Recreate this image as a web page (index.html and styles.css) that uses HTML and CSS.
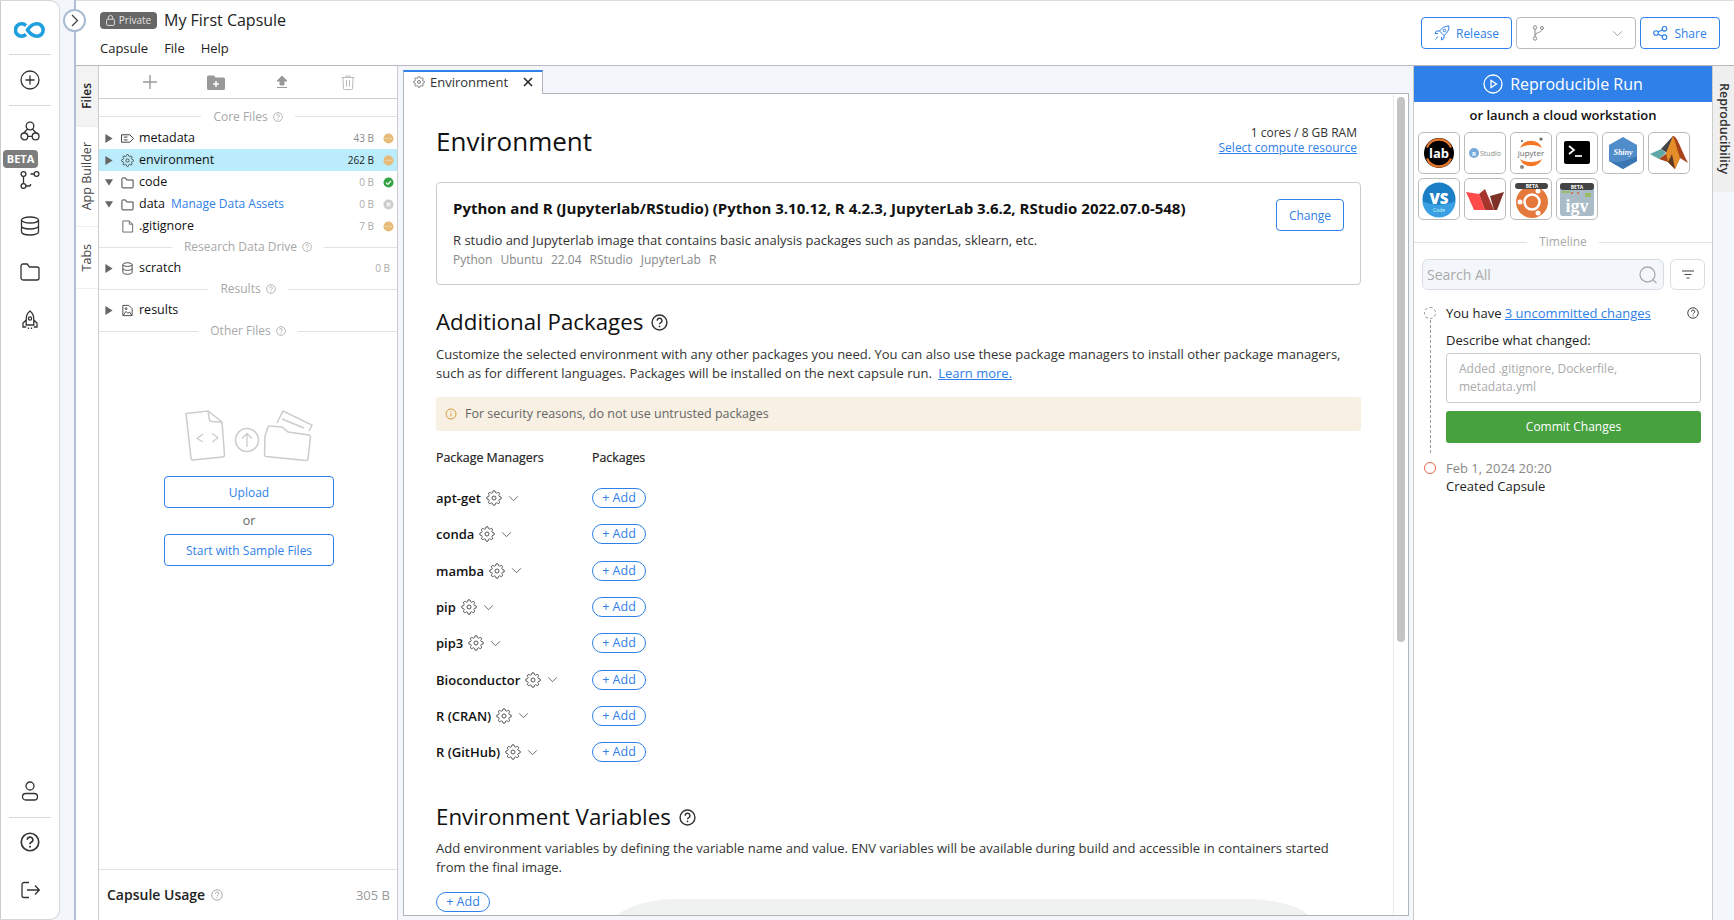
FILE: index.html
```html
<!DOCTYPE html>
<html lang="en">
<head>
<meta charset="utf-8">
<title>My First Capsule</title>
<link rel="stylesheet" href="styles.css">
</head>
<body>
<svg class="defs" aria-hidden="true">
  <symbol id="gear" viewBox="0 0 24 24"><g fill="none" stroke="currentColor" stroke-width="1.5"><circle cx="12" cy="12" r="3"/><path d="M19.4 15a1.65 1.65 0 0 0 .33 1.82l.06.06a2 2 0 0 1 0 2.83 2 2 0 0 1-2.83 0l-.06-.06a1.65 1.65 0 0 0-1.82-.33 1.65 1.65 0 0 0-1 1.51V21a2 2 0 0 1-2 2 2 2 0 0 1-2-2v-.09A1.65 1.65 0 0 0 9 19.4a1.65 1.65 0 0 0-1.82.33l-.06.06a2 2 0 0 1-2.83 0 2 2 0 0 1 0-2.83l.06-.06a1.65 1.65 0 0 0 .33-1.82 1.65 1.65 0 0 0-1.51-1H3a2 2 0 0 1-2-2 2 2 0 0 1 2-2h.09A1.65 1.65 0 0 0 4.6 9a1.65 1.65 0 0 0-.33-1.82l-.06-.06a2 2 0 0 1 0-2.83 2 2 0 0 1 2.83 0l.06.06a1.65 1.65 0 0 0 1.82.33H9a1.65 1.65 0 0 0 1-1.51V3a2 2 0 0 1 2-2 2 2 0 0 1 2 2v.09a1.65 1.65 0 0 0 1 1.51 1.65 1.65 0 0 0 1.82-.33l.06-.06a2 2 0 0 1 2.83 0 2 2 0 0 1 0 2.83l-.06.06a1.65 1.65 0 0 0-.33 1.82V9a1.65 1.65 0 0 0 1.51 1H21a2 2 0 0 1 2 2 2 2 0 0 1-2 2h-.09a1.65 1.65 0 0 0-1.51 1z"/></g></symbol>
  <symbol id="help" viewBox="0 0 24 24"><circle cx="12" cy="12" r="10.5" fill="none" stroke="currentColor" stroke-width="2"/><path d="M8.8 9.4a3.3 3.3 0 1 1 4.6 3c-1 .5-1.4 1-1.4 2.2" fill="none" stroke="currentColor" stroke-width="2"/><circle cx="12" cy="17.6" r="1.2" fill="currentColor"/></symbol>
  <symbol id="chev" viewBox="0 0 12 8"><path d="M1 1.5l5 5 5-5" fill="none" stroke="currentColor" stroke-width="1.1"/></symbol>
  <symbol id="arrow-r" viewBox="0 0 8 10"><path d="M0 0l8 5-8 5z" fill="currentColor"/></symbol>
  <symbol id="arrow-d" viewBox="0 0 10 8"><path d="M0 0h10L5 8z" fill="currentColor"/></symbol>
  <symbol id="folder" viewBox="0 0 14 13"><path d="M1 3V11.5a.8.8 0 0 0 .8.8h10.4a.8.8 0 0 0 .8-.8V3.8H6L5 1.6H1.8A.8.8 0 0 0 1 2.4z" fill="none" stroke="currentColor"/></symbol>
  <symbol id="dot-wait" viewBox="0 0 12 12"><circle cx="6" cy="6" r="5.5" fill="#e6bb78"/><g fill="#f3dcb4"><circle cx="3.2" cy="6" r=".9"/><circle cx="6" cy="6" r=".9"/><circle cx="8.8" cy="6" r=".9"/></g></symbol>
</svg>

<nav class="rail">
  <div class="rail-logo">
    <svg width="32" height="16" viewBox="0 0 32 16"><path d="M12 3.600A6.200 6.200 0 1 0 12 12.400" fill="none" stroke="#1f9fde" stroke-width="3.600"/><path d="M13.500 8C15.500 5 18 1.800 23 1.800A6.200 6.200 0 0 1 23 14.200C18 14.200 15.500 11 13.500 8Z" fill="none" stroke="#1f9fde" stroke-width="3.600"/></svg>
  </div>
  <div class="rail-btn rail-plus bordered">
    <svg class="ri" viewBox="0 0 20 20"><circle cx="10" cy="10" r="9"/><path d="M10 5.500v9M5.500 10h9"/></svg>
  </div>
  <div class="rail-btn rail-net">
    <svg class="ri" viewBox="0 0 20 20"><circle cx="10" cy="5" r="3.800"/><circle cx="4.400" cy="15.400" r="3.400"/><circle cx="15.600" cy="15.400" r="3.400"/><path d="M7.600 8L3.500 12.200M12.400 8l4.100 4.200M7.800 15.400h4.400"/></svg>
  </div>
  <div class="rail-btn rail-git">
    <svg class="ri" viewBox="0 0 20 20"><circle cx="3.500" cy="4" r="2.400"/><circle cx="16.500" cy="4" r="2.400"/><circle cx="3.500" cy="16" r="2.400"/><path d="M3.500 6.400V13.600M14.100 4H10.500M5.900 16H9c1 0 1.600-.6 1.600-2"/></svg>
  </div>
  <div class="rail-btn rail-db">
    <svg class="ri" viewBox="0 0 20 20"><ellipse cx="10" cy="4" rx="8.500" ry="3"/><path d="M1.500 4v12c0 1.700 3.800 3 8.500 3s8.500-1.300 8.500-3V4M1.500 10c0 1.700 3.800 3 8.500 3s8.500-1.300 8.500-3"/></svg>
  </div>
  <div class="rail-btn rail-folder">
    <svg class="ri" viewBox="0 0 20 20"><path d="M1 4a2 2 0 0 1 2-2h4.200l2.300 3H17a2 2 0 0 1 2 2v9a2 2 0 0 1-2 2H3a2 2 0 0 1-2-2z"/></svg>
  </div>
  <div class="rail-btn">
    <svg class="ri" viewBox="0 0 20 20"><path d="M10 1c2.600 2 3.800 5 3.800 8v6H6.200V9C6.200 6 7.400 3 10 1zM6.200 10L3 13v4h3.200M13.800 10L17 13v4h-3.200M8.500 17.500v1.500M11.500 17.500v1.500"/><circle cx="10" cy="8.500" r="1.600"/></svg>
  </div>
  <div class="beta-badge">BETA</div>
  <div class="rail-bottom">
    <div class="rail-btn rail-user bordered">
      <svg class="ri" viewBox="0 0 20 20"><circle cx="10" cy="5" r="4"/><rect x="2.500" y="12.500" width="15" height="6.500" rx="3.250"/></svg>
    </div>
    <div class="rail-btn rail-help">
      <svg class="ri ri-help"><use href="#help"/></svg>
    </div>
    <div class="rail-btn">
      <svg class="ri" viewBox="0 0 20 20"><path d="M9 2.500H4a2 2 0 0 0-2 2v11a2 2 0 0 0 2 2h5M7 10h12M15 5.500l4.300 4.500-4.300 4.500"/></svg>
    </div>
  </div>
</nav>

<div class="gutter">
  <div class="toggle"><svg width="8" height="13" viewBox="0 0 8 13"><path d="M1 1l5.500 5.500L1 12" fill="none" stroke="#444" stroke-width="1.300"/></svg></div>
</div>

<div class="main">
  <header class="top">
    <div class="top-left">
      <div class="title-row">
        <span class="badge">
          <svg width="9" height="11" viewBox="0 0 9 11"><rect x=".6" y="4.200" width="7.800" height="6.200" rx="1" fill="none" stroke="#ddd"/><path d="M2.300 4.200V2.700a2.200 2.200 0 0 1 4.400 0v1.500" fill="none" stroke="#ddd"/></svg>
          Private
        </span>
        <span class="title">My First Capsule</span>
      </div>
      <div class="menu"><span>Capsule</span><span>File</span><span>Help</span></div>
    </div>
    <div class="top-actions">
      <button class="tbtn tbtn-release">
        <svg width="16" height="16" viewBox="0 0 16 16" fill="none" stroke="#2f80e8"><path d="M15 1c-4 0-7 1.500-9.500 5l4.500 4.500C13.500 8 15 5 15 1zM5.500 6H2.500L1 8.500h3M10 10.500v3L7.500 15v-3M4 11.500L1.500 14.500"/><circle cx="10.500" cy="5.500" r="1.300"/></svg>
        Release
      </button>
      <button class="tbtn tbtn-branch">
        <svg width="12" height="16" viewBox="0 0 12 16" fill="none" stroke="#888"><circle cx="3" cy="2.500" r="1.700"/><circle cx="3" cy="13.500" r="1.700"/><circle cx="10" cy="3" r="1.500"/><path d="M3 4.200v7.600M10 4.500c0 3-7 3-7 6"/></svg>
        <svg class="branch-chev"><use href="#chev"/></svg>
      </button>
      <button class="tbtn tbtn-share">
        <svg width="15" height="14" viewBox="0 0 15 14" fill="none" stroke="#2f80e8" stroke-width="1.100"><circle cx="3" cy="7" r="2.300"/><circle cx="11.500" cy="2.800" r="2.300"/><circle cx="11.500" cy="11.200" r="2.300"/><path d="M5 6l4.500-2.300M5 8l4.500 2.300"/></svg>
        Share
      </button>
    </div>
  </header>

  <div class="work">
    <div class="vtabs">
      <div class="vtab vtab-files"><span>Files</span></div>
      <div class="vtab vtab-app"><span>App Builder</span></div>
      <div class="vtab vtab-tabs"><span>Tabs</span></div>
    </div>

    <aside class="files">
      <div class="file-tools">
        <svg width="16" height="16" viewBox="0 0 16 16"><path d="M8 1v14M1 8h14" stroke="#999" stroke-width="1.400" fill="none"/></svg>
        <svg width="18" height="15" viewBox="0 0 18 15"><path d="M0 2a1.500 1.500 0 0 1 1.500-1.500H7L8.500 2.500h8A1.500 1.500 0 0 1 18 4v9.500a1.500 1.500 0 0 1-1.500 1.500h-15A1.500 1.500 0 0 1 0 13.500z" fill="#999"/><path d="M9 6v6M6 9h6" stroke="#fff" stroke-width="1.500"/></svg>
        <svg width="12" height="15" viewBox="0 0 12 15"><path d="M6 1l5 5H8v4H4V6H1zM1 12.500h10" fill="#999" stroke="#999"/></svg>
        <svg width="14" height="15" viewBox="0 0 14 15" fill="none" stroke="#bbb"><path d="M.5 2.500h13M5 2.500V1h4v1.500M2 2.500l.5 11a1 1 0 0 0 1 1h7a1 1 0 0 0 1-1l.5-11M5.500 5v6.500M8.500 5v6.500"/></svg>
      </div>
      <div class="sect sect-core"><span>Core Files</span><svg class="qi"><use href="#help"/></svg></div>
      <div class="row">
        <svg class="tw"><use href="#arrow-r"/></svg>
        <svg class="fi" viewBox="0 0 14 13" fill="none" stroke="#333"><path d="M.5 2.500h9l4 4-4 4h-9zM3 5h4M3 8h4"/></svg>
        <span class="name">metadata</span><span class="size">43 B</span><svg class="st"><use href="#dot-wait"/></svg>
      </div>
      <div class="row row-sel">
        <svg class="tw"><use href="#arrow-r"/></svg>
        <svg class="fi"><use href="#gear"/></svg>
        <span class="name">environment</span><span class="size">262 B</span><svg class="st"><use href="#dot-wait"/></svg>
      </div>
      <div class="row">
        <svg class="tw"><use href="#arrow-d"/></svg>
        <svg class="fi"><use href="#folder"/></svg>
        <span class="name">code</span><span class="size size-light">0 B</span>
        <svg class="st" viewBox="0 0 12 12"><circle cx="6" cy="6" r="5.500" fill="#35a244"/><path d="M3.300 6.200l1.900 1.800 3.500-3.600" stroke="#fff" stroke-width="1.300" fill="none"/></svg>
      </div>
      <div class="row">
        <svg class="tw"><use href="#arrow-d"/></svg>
        <svg class="fi"><use href="#folder"/></svg>
        <span class="name">data</span><a class="assets">Manage Data Assets</a><span class="size size-light">0 B</span>
        <svg class="st" viewBox="0 0 12 12"><circle cx="6" cy="6" r="5.500" fill="#ccc"/><path d="M4 4l4 4M8 4l-4 4" stroke="#fff" stroke-width="1.200"/></svg>
      </div>
      <div class="row">
        <span class="tw"></span>
        <svg class="fi" viewBox="0 0 14 13" fill="none" stroke="#666"><path d="M2 .5h7l3.500 3.500v8.500H2zM9 .5V4h3.500"/></svg>
        <span class="name">.gitignore</span><span class="size size-light">7 B</span><svg class="st"><use href="#dot-wait"/></svg>
      </div>
      <div class="sect"><span>Research Data Drive</span><svg class="qi"><use href="#help"/></svg></div>
      <div class="row">
        <svg class="tw"><use href="#arrow-r"/></svg>
        <svg class="fi" viewBox="0 0 14 14" fill="none" stroke="#444"><ellipse cx="7" cy="2.800" rx="5" ry="2"/><path d="M2 2.800v8.400c0 1.100 2.200 2 5 2s5-.9 5-2V2.800M2 7c0 1.100 2.200 2 5 2s5-.9 5-2"/></svg>
        <span class="name">scratch</span><span class="size size-light size-end">0 B</span>
      </div>
      <div class="sect"><span>Results</span><svg class="qi"><use href="#help"/></svg></div>
      <div class="row">
        <svg class="tw"><use href="#arrow-r"/></svg>
        <svg class="fi" viewBox="0 0 14 14" fill="none" stroke="#444"><path d="M2 12.500V1.500h6.500L12 5v7.500zM2.500 12l3-4 2 2 1.500-1.500 2.500 3.500"/><circle cx="5.500" cy="5" r="1"/></svg>
        <span class="name">results</span>
      </div>
      <div class="sect"><span>Other Files</span><svg class="qi"><use href="#help"/></svg></div>
      <div class="drop">
        <svg class="drop-art" width="130" height="52" viewBox="0 0 130 52" fill="none" stroke="#ccc" stroke-width="1.500">
          <path d="M1 3.500L23 1l14 11 2.500 33a2 2 0 0 1-2 2L8 50a2 2 0 0 1-2-2zM23 1l1.500 9a2 2 0 0 0 2 1.500L37 12"/>
          <path d="M18 24l-6 4.500 6 3.500M27 23.500l6 4-5.500 4.500" stroke-width="1.300"/>
          <circle cx="62" cy="30" r="11.500"/><path d="M62 37V24M57 28.500l5-5 5 5" stroke-width="1.300"/>
          <path d="M82 25L85 16a2 2 0 0 1 2-1l12 1 6 5 21 3a2 2 0 0 1 1.500 2L125 48a2 2 0 0 1-2 1.500L83 45.500a2 2 0 0 1-1.500-2z" transform="translate(-2 1)"/>
          <path d="M92 13L98 1l29 14-3 6M97 9l22 9"/>
        </svg>
        <button class="obtn drop-btn">Upload</button>
        <div class="or">or</div>
        <button class="obtn drop-btn">Start with Sample Files</button>
      </div>
      <div class="usage"><b>Capsule Usage</b><svg class="qi"><use href="#help"/></svg><span>305 B</span></div>
    </aside>

    <section class="center">
      <div class="tabbar">
        <div class="tab"><svg class="tab-gear"><use href="#gear"/></svg><span>Environment</span><svg class="tab-x" viewBox="0 0 10 10"><path d="M1 1l8 8M9 1l-8 8" stroke="#222" stroke-width="1.500"/></svg></div>
      </div>
      <div class="pane">
        <div class="scroll">
          <div class="env-head">
            <h1>Environment</h1>
            <div class="res"><div>1 cores / 8 GB RAM</div><a>Select compute resource</a></div>
          </div>
          <div class="card">
            <div class="card-body">
              <div class="card-title">Python and R (Jupyterlab/RStudio) (Python 3.10.12, R 4.2.3, JupyterLab 3.6.2, RStudio 2022.07.0-548)</div>
              <div class="card-desc">R studio and Jupyterlab image that contains basic analysis packages such as pandas, sklearn, etc.</div>
              <div class="card-tags"><span>Python</span><span>Ubuntu</span><span>22.04</span><span>RStudio</span><span>JupyterLab</span><span>R</span></div>
            </div>
            <button class="obtn change">Change</button>
          </div>
          <h2 class="h2-pkg">Additional Packages<svg class="h2q"><use href="#help"/></svg></h2>
          <p class="para">Customize the selected environment with any other packages you need. You can also use these package managers to install other package managers, such as for different languages. Packages will be installed on the next capsule run. <a class="learn">Learn more.</a></p>
          <div class="notice"><svg width="12" height="12" viewBox="0 0 12 12" fill="none" stroke="#d59a3a"><circle cx="6" cy="6" r="5"/><path d="M6 5.300v3.200M6 3.200v1"/></svg><span>For security reasons, do not use untrusted packages</span></div>
          <div class="pk-head"><span>Package Managers</span><span>Packages</span></div>
          <div class="pk"><div class="pk-name"><b>apt-get</b><svg class="cog"><use href="#gear"/></svg><svg class="cv"><use href="#chev"/></svg></div><button class="add">+ Add</button></div>
          <div class="pk"><div class="pk-name"><b>conda</b><svg class="cog"><use href="#gear"/></svg><svg class="cv"><use href="#chev"/></svg></div><button class="add">+ Add</button></div>
          <div class="pk"><div class="pk-name"><b>mamba</b><svg class="cog"><use href="#gear"/></svg><svg class="cv"><use href="#chev"/></svg></div><button class="add">+ Add</button></div>
          <div class="pk"><div class="pk-name"><b>pip</b><svg class="cog"><use href="#gear"/></svg><svg class="cv"><use href="#chev"/></svg></div><button class="add">+ Add</button></div>
          <div class="pk"><div class="pk-name"><b>pip3</b><svg class="cog"><use href="#gear"/></svg><svg class="cv"><use href="#chev"/></svg></div><button class="add">+ Add</button></div>
          <div class="pk"><div class="pk-name"><b>Bioconductor</b><svg class="cog"><use href="#gear"/></svg><svg class="cv"><use href="#chev"/></svg></div><button class="add">+ Add</button></div>
          <div class="pk"><div class="pk-name"><b>R (CRAN)</b><svg class="cog"><use href="#gear"/></svg><svg class="cv"><use href="#chev"/></svg></div><button class="add">+ Add</button></div>
          <div class="pk"><div class="pk-name"><b>R (GitHub)</b><svg class="cog"><use href="#gear"/></svg><svg class="cv"><use href="#chev"/></svg></div><button class="add">+ Add</button></div>
          <h2 class="h2-env">Environment Variables<svg class="h2q"><use href="#help"/></svg></h2>
          <p class="para para-env">Add environment variables by defining the variable name and value. ENV variables will be available during build and accessible in containers started from the final image.</p>
          <button class="add add-env">+ Add</button>
        </div>
        <div class="sbar"><div class="thumb"></div></div>
        <div class="peek"></div>
      </div>
    </section>

    <aside class="repro">
      <button class="run">
        <svg width="20" height="20" viewBox="0 0 20 20" fill="none" stroke="#fff" stroke-width="1.300"><circle cx="10" cy="10" r="9"/><path d="M8 6.500v7l5.500-3.500z"/></svg>
        Reproducible Run
      </button>
      <div class="launch">or launch a cloud workstation</div>
      <div class="tiles">
        <div class="tile"><svg viewBox="0 0 40 40"><circle cx="20" cy="20" r="15" fill="#000"/><path d="M7 26a14 14 0 0 0 26 0l-2-1a12 12 0 0 1-22 0z" fill="#e4762a"/><path d="M7 14a14 14 0 0 1 26 0l-2 1a12 12 0 0 0-22 0z" fill="#e4762a"/><text x="20" y="25" class="t-lab">lab</text></svg></div>
        <div class="tile"><svg viewBox="0 0 40 40"><circle cx="9" cy="20" r="5" fill="#75aadb"/><text x="9" y="22.500" class="t-r">R</text><text x="15" y="22.500" class="t-studio">Studio</text></svg></div>
        <div class="tile"><svg viewBox="0 0 40 40"><path d="M9 15a12 12 0 0 1 22 0c-5-4-17-4-22 0zM9 26a12 12 0 0 0 22 0c-5 4-17 4-22 0z" fill="#f37726"/><circle cx="30" cy="6" r="1.600" fill="#666"/><circle cx="11" cy="8" r="1.200" fill="#888"/><circle cx="11" cy="34" r="2" fill="#888"/><text x="20" y="23" class="t-jup">jupyter</text></svg></div>
        <div class="tile"><svg viewBox="0 0 40 40"><rect x="7" y="8" width="26" height="23" rx="2" fill="#000"/><path d="M12 13l5 4-5 4" fill="none" stroke="#fff" stroke-width="1.700"/><path d="M18 23h7" stroke="#fff" stroke-width="1.700"/></svg></div>
        <div class="tile"><svg viewBox="0 0 40 40"><path d="M20 4l14 8v16l-14 8-14-8V12z" fill="#4f8cc9"/><path d="M6 28c10 3 19-1 28-5v5l-14 8-14-8z" fill="#3a76b3"/><text x="20" y="22" class="t-shiny">Shiny</text></svg></div>
        <div class="tile"><svg viewBox="0 0 40 40"><path d="M1 21l11-5 5 4-7 6z" fill="#5fa8a8"/><path d="M12 16L24 3l4 5-10 12z" fill="#444"/><path d="M24 3c4 0 7 11 15 27l-8-5-5 11-7-7-9-3 8-6z" fill="#a8431a"/><path d="M24 3c3 7 4 14 7 22l-5 11-7-7-2-9z" fill="#e58e29"/><path d="M19 29l4-8 3 15z" fill="#5c3a22"/></svg></div>
        <div class="tile"><svg viewBox="0 0 40 40"><circle cx="20" cy="20" r="16.500" fill="#1a7fc4"/><path d="M3.500 22c10 5 23 5 33 0a16.500 16.500 0 0 1-33 0z" fill="#3aa0e3"/><text x="20" y="25" class="t-vs">VS</text><text x="20" y="33" class="t-code">Code</text></svg></div>
        <div class="tile"><svg viewBox="0 0 40 40"><path d="M1 13l13 2 6 16h-11z" fill="#ff4b4b"/><path d="M14 15l6-5 9 21h-9z" fill="#a8342e"/><path d="M25 17l14-4-7 18h-3z" fill="#7c3229"/></svg></div>
        <div class="tile"><svg viewBox="0 0 40 40"><circle cx="21" cy="23" r="16" fill="#e5793b"/><circle cx="21" cy="23" r="7.500" fill="none" stroke="#fff" stroke-width="2.500"/><circle cx="9" cy="23" r="2.500" fill="#fff"/><circle cx="27" cy="12" r="2.500" fill="#fff"/><circle cx="27" cy="34" r="2.500" fill="#fff"/><rect x="4" y="4" width="33" height="6" rx="3" fill="#444"/><text x="21" y="9" class="t-beta">BETA</text></svg></div>
        <div class="tile"><svg viewBox="0 0 40 40"><rect x="3" y="4" width="34" height="33" rx="3" fill="#a9bbc7"/><rect x="3" y="4" width="34" height="7" rx="3" fill="#444"/><text x="20" y="9.500" class="t-beta">BETA</text><g fill="#9b6"><rect x="5" y="12" width="8" height="2"/><rect x="28" y="14" width="6" height="4"/></g><path d="M14 13h2v2h-2zM20 13h2v2h-2z" fill="#c75"/><text x="20" y="33" class="t-igv">igv</text></svg></div>
      </div>
      <div class="sect sect-time"><span>Timeline</span></div>
      <div class="search-row">
        <div class="search"><span>Search All</span><svg width="20" height="20" viewBox="0 0 20 20" fill="none" stroke="#aaa" stroke-width="1.300"><circle cx="9.500" cy="9.500" r="7.500"/><path d="M15 15l3.500 3"/></svg></div>
        <div class="filter"><svg width="14" height="9" viewBox="0 0 14 9"><path d="M1 1h12M3.500 4.500h7M5.500 8h3" stroke="#444" stroke-width="1.100"/></svg></div>
      </div>
      <div class="tl">
        <div class="tl-track">
          <span class="tl-dash"></span>
          <span class="tl-line"></span>
          <span class="tl-ring"></span>
        </div>
        <div class="tl-body">
          <div class="tl-first"><span>You have <a>3 uncommitted changes</a></span><svg class="tl-q"><use href="#help"/></svg></div>
          <div class="tl-label">Describe what changed:</div>
          <div class="tl-input">Added .gitignore, Dockerfile,<br>metadata.yml</div>
          <button class="commit">Commit Changes</button>
          <div class="tl-date">Feb 1, 2024 20:20</div>
          <div class="tl-created">Created Capsule</div>
        </div>
      </div>
    </aside>

    <div class="rtab"><span>Reproducibility</span></div>
  </div>
</div>
</body>
</html>
```

FILE: styles.css
```css
* { box-sizing: border-box; }
html, body { height: 100%; }
body {
  margin: 0;
  width: 1734px;
  height: 920px;
  overflow: hidden;
  display: flex;
  background: #f3f6fb;
  color: #111;
  font-family: "Open Sans", "Liberation Sans", sans-serif;
  font-size: 13px;
  line-height: 18px;
}
.defs { position: absolute; width: 0; height: 0; }
a { color: #2f80e8; }
button { font-family: inherit; background: #fff; cursor: pointer; }

/* rail */
.rail {
  position: relative;
  width: 60px;
  flex: none;
  background: #fff;
  border: 1px solid #d6d6d6;
  border-left-color: #ccc;
  border-top-right-radius: 10px;
  border-bottom-right-radius: 10px;
  display: flex;
  flex-direction: column;
}
.rail-logo { height: 54px; margin: 0 8px; padding-top: 21px; display: flex; justify-content: center; align-items: flex-start; border-bottom: 1px solid #d8d8d8; }
.rail-btn { height: 47px; margin: 0 8px; display: flex; align-items: center; justify-content: center; }
.rail-plus { height: 51px; }
.bordered { border-bottom: 1px solid #d8d8d8; }
.rail-net { height: 50px; }
.rail-git { height: 48px; }
.rail-db { height: 44px; }
.rail-folder { height: 48px; }
.ri { width: 20px; height: 20px; fill: none; stroke: #333; stroke-width: 1.300; color: #333; }
.ri-help { stroke: none; }
.beta-badge {
  position: absolute;
  left: 2px;
  top: 149px;
  width: 35px;
  height: 18px;
  background: #7d7d7d;
  color: #fff;
  font-weight: 700;
  font-size: 11px;
  line-height: 18px;
  text-align: center;
  border-radius: 4px;
}
.rail-bottom { margin-top: auto; padding-bottom: 6px; }
.rail-user { height: 54px; }
.rail-help { height: 48px; }

/* gutter */
.gutter { width: 16px; flex: none; position: relative; border-right: 2px solid #b4bfd6; }
.toggle {
  position: absolute;
  left: 3px;
  top: 9px;
  width: 23px;
  height: 23px;
  border-radius: 50%;
  background: #fff;
  border: 2px solid #a9bcd2;
  display: flex;
  align-items: center;
  justify-content: center;
  z-index: 2;
}

.main { flex: 1; min-width: 0; display: flex; flex-direction: column; }

/* header */
.top {
  height: 66px;
  flex: none;
  background: #fff;
  border-top: 1px solid #ddd;
  border-bottom: 1px solid #b9b9bd;
  display: flex;
  justify-content: space-between;
  padding: 0 14px 0 24px;
}
.title-row { display: flex; align-items: center; margin-top: 8px; height: 22px; gap: 7px; }
.badge {
  height: 17px;
  width: 57px;
  background: #666;
  color: #e2e2e2;
  border-radius: 4px;
  font-size: 10px;
  line-height: 17px;
  display: inline-flex;
  align-items: center;
  justify-content: center;
  gap: 4px;
}
.title { font-size: 16px; line-height: 22px; color: #222; }
.menu { display: flex; gap: 16px; margin-top: 8px; font-size: 13px; color: #222; }
.top-actions { display: flex; gap: 4px; padding-top: 16px; }
.tbtn {
  height: 32px;
  border: 1px solid #2f80e8;
  border-radius: 4px;
  color: #2f80e8;
  font-size: 12px;
  display: flex;
  align-items: center;
  justify-content: center;
  gap: 6px;
  padding: 0;
}
.tbtn-release { width: 91px; }
.tbtn-branch { width: 120px; border-color: #bbb; justify-content: space-between; padding: 0 12px 0 15px; }
.branch-chev { width: 11px; height: 7px; color: #999; }
.tbtn-share { width: 80px; }

/* workspace */
.work { flex: 1; min-height: 0; display: flex; }
.vtabs { width: 22px; flex: none; background: #fff; display: flex; flex-direction: column; }
.vtab { display: flex; align-items: center; justify-content: center; border-bottom: 1px solid #eee; }
.vtab span { writing-mode: vertical-rl; transform: rotate(180deg); font-size: 12.500px; color: #444; white-space: nowrap; }
.vtab-files { height: 61px; background: #f3f3f3; }
.vtab-files span { font-weight: 600; color: #222; font-size: 12px; }
.vtab-app { height: 100px; }
.vtab-tabs { height: 62px; }

/* files */
.files {
  width: 300px;
  flex: none;
  background: #fff;
  border-left: 1px solid #ccc;
  border-right: 1px solid #ccc;
  display: flex;
  flex-direction: column;
}
.file-tools {
  height: 33px;
  flex: none;
  border-bottom: 1px solid #ccc;
  display: grid;
  grid-template-columns: repeat(4, 66px);
  padding-left: 18px;
  align-items: center;
  justify-items: center;
}
.sect { display: flex; align-items: center; justify-content: center; gap: 5px; color: #a8a8a8; font-size: 12px; height: 20px; }
.sect::before, .sect::after { content: ""; flex: 1; height: 1px; background: #e2e2e2; }
.sect::before { margin-right: 7px; }
.sect::after { margin-left: 7px; }
.sect-core { height: 28px; padding-top: 7px; }
.qi { width: 10px; height: 10px; color: #aaa; }
.row { height: 22px; display: flex; align-items: center; padding-left: 6px; }
.row-sel { background: #bbecfb; }
.tw { width: 8px; height: 9px; color: #666; flex: none; margin-right: 8px; }
.fi { width: 13px; height: 13px; color: #333; flex: none; margin-right: 5px; }
.name { font-size: 12.500px; color: #111; }
.assets { font-size: 12px; margin-left: 6px; }
.size { margin-left: auto; font-size: 10px; color: #888; margin-right: 9px; }
.row-sel .size { color: #222; }
.size-light { color: #aaa; }
.size-end { margin-right: 7px; }
.st { width: 11px; height: 11px; flex: none; margin-right: 3px; }
.drop { flex: 1; display: flex; flex-direction: column; align-items: center; padding: 69px 0 0 2px; }
.drop-art { margin-bottom: 14px; margin-left: 1px; }
.obtn { border: 1px solid #2f80e8; border-radius: 4px; color: #2f80e8; font-size: 12px; padding: 0; }
.drop-btn { width: 170px; height: 32px; flex: none; }
.or { margin: 4px 0; height: 18px; color: #666; font-size: 12.500px; }
.usage {
  height: 51px;
  flex: none;
  border-top: 1px solid #e2e2e2;
  display: flex;
  align-items: center;
  padding: 0 7px 0 8px;
  gap: 6px;
}
.usage b { font-weight: 600; font-size: 14px; color: #222; }
.usage span { margin-left: auto; color: #999; font-size: 13px; }
.usage .qi { width: 12px; height: 12px; }

/* center */
.center { width: 1006px; flex: none; margin-left: 5px; display: flex; flex-direction: column; padding-bottom: 4px; }
.tabbar { height: 27px; flex: none; display: flex; align-items: flex-end; }
.tab {
  width: 140px;
  height: 24px;
  background: #fff;
  border-top: 2px solid #2f80e8;
  border-right: 1px solid #b0b4bb;
  border-left: 1px solid #b0b4bb;
  display: flex;
  align-items: center;
  padding: 0 0 2px 9px;
  font-size: 13px;
  color: #333;
  margin-bottom: -1px;
  position: relative;
  z-index: 1;
}
.tab-gear { width: 12px; height: 12px; color: #555; margin-right: 5px; }
.tab-x { width: 10px; height: 10px; margin-left: auto; margin-right: 9px; }
.pane {
  flex: 1;
  min-height: 0;
  background: #fff;
  border: 1px solid #b0b4bb;
  display: flex;
  position: relative;
  overflow: hidden;
}
.scroll { flex: 1; min-width: 0; padding: 0 32px; overflow: hidden; }
.sbar { width: 15px; flex: none; border-left: 1px solid #eaeaea; padding: 3px 0 0 3px; }
.thumb { width: 8px; height: 545px; border-radius: 4px; background: #c4c4c4; }
.peek { position: absolute; left: 205px; bottom: -30px; width: 708px; height: 46px; border-radius: 70px 70px 0 0 / 30px 30px 0 0; background: #f0f1f1; }
.env-head { display: flex; justify-content: space-between; height: 88px; }
h1 { font-size: 26px; font-weight: 400; margin: 0; padding-top: 30px; line-height: 34px; color: #111; }
.res { padding-top: 31px; text-align: right; font-size: 12px; line-height: 15px; padding-right: 4px; color: #333; }
.res a { text-decoration: underline; }
.card {
  height: 103px;
  border: 1px solid #ccc;
  border-radius: 4px;
  display: flex;
  justify-content: space-between;
  padding: 16px 16px 0 16px;
}
.card-title { font-weight: 700; font-size: 15px; line-height: 19px; color: #111; }
.card-desc { margin-top: 13px; font-size: 13px; color: #333; }
.card-tags { display: flex; gap: 8px; font-size: 12px; color: #888; margin-top: 2px; }
.change { width: 68px; height: 32px; flex: none; }
h2 { font-size: 22.300px; font-weight: 400; margin: 0; line-height: 30px; display: flex; align-items: center; gap: 8px; color: #111; }
.h2q { width: 17px; height: 17px; color: #333; }
.h2-pkg { margin-top: 22px; }
.para { margin: 8px 0 0; font-size: 13px; line-height: 19px; color: #333; }
.para-env { margin-top: 7px; }
.learn { text-decoration: underline; margin-left: 3px; }
.notice {
  margin-top: 14px;
  height: 34px;
  background: #f7f0e3;
  border-radius: 3px;
  display: flex;
  align-items: center;
  gap: 8px;
  padding-left: 9px;
  font-size: 12.500px;
  color: #666;
}
.pk-head { display: grid; grid-template-columns: 156px 1fr; margin-top: 18px; font-size: 12.400px; color: #222; height: 18px; margin-bottom: 13px; -webkit-text-stroke: .2px #222; }
.pk { display: grid; grid-template-columns: 156px 1fr; align-items: center; height: 36.300px; }
.pk-name { display: flex; align-items: center; }
.pk-name b { font-weight: 600; font-size: 13px; color: #111; }
.cog { width: 16px; height: 16px; color: #555; margin-left: 5px; }
.cv { width: 11px; height: 7px; color: #666; margin-left: 6px; }
.add { width: 54px; height: 20px; border: 1px solid #2f80e8; border-radius: 10px; color: #2f80e8; font-size: 12.500px; line-height: 16px; padding: 0; }
.h2-env { margin-top: 32px; }
.add-env { margin-top: 15px; display: block; }

/* repro */
.repro {
  width: 300px;
  flex: none;
  margin-left: 4px;
  background: #fff;
  border-left: 1px solid #ccc;
  border-right: 1px solid #ccc;
}
.run {
  display: flex;
  align-items: center;
  justify-content: center;
  gap: 7px;
  width: 100%;
  height: 36px;
  border: 0;
  background: #2f80e8;
  color: #fff;
  font-size: 16px;
}
.launch { text-align: center; font-weight: 600; font-size: 13px; line-height: 18px; margin-top: 4px; color: #111; height: 20px; }
.tiles { display: grid; grid-template-columns: repeat(6, 42px); grid-auto-rows: 42px; gap: 4px; padding-left: 4px; margin-top: 6px; }
.tile { border: 1px solid #bbb; border-radius: 5px; background: #fff; display: flex; align-items: center; justify-content: center; }
.tile svg { width: 40px; height: 40px; }
.t-lab { font: 700 13px "Open Sans", sans-serif; fill: #fff; text-anchor: middle; }
.t-r { font: 700 6px "Open Sans", sans-serif; fill: #fff; text-anchor: middle; }
.t-studio { font: 400 7px "Open Sans", sans-serif; fill: #888; }
.t-jup { font: 400 8px "Open Sans", sans-serif; fill: #666; text-anchor: middle; }
.t-shiny { font: italic 700 8px "Liberation Serif", serif; fill: #fff; text-anchor: middle; }
.t-vs { font: 800 15px "Open Sans", sans-serif; fill: #fff; text-anchor: middle; }
.t-code { font: 400 5px "Open Sans", sans-serif; fill: #cfe; text-anchor: middle; }
.t-beta { font: 700 5px "Open Sans", sans-serif; fill: #fff; text-anchor: middle; }
.t-igv { font: 700 18px "Liberation Serif", serif; fill: #fff; text-anchor: middle; }
.sect-time { margin-top: 12px; height: 20px; }
.search-row { display: flex; gap: 6px; padding: 7px 7px 0 8px; }
.search {
  width: 244px;
  height: 31px;
  background: #f3f6fb;
  border: 1px solid #d8dde5;
  border-radius: 6px;
  display: flex;
  align-items: center;
  justify-content: space-between;
  padding: 1px 5px 0 4px;
  color: #aaa;
  font-size: 14px;
}
.filter { width: 35px; height: 31px; border: 1px solid #ddd; border-radius: 6px; display: flex; align-items: center; justify-content: center; }
.tl { display: flex; padding: 14px 11px 0 7px; }
.tl-track { width: 24px; flex: none; display: flex; flex-direction: column; align-items: flex-start; padding-left: 3px; }
.tl-dash { width: 12px; height: 12px; border-radius: 50%; border: 1px dashed #999; margin-top: 3px; flex: none; }
.tl-line { width: 0; height: 133px; border-left: 1px dashed #999; margin-left: 6px; margin-top: 1px; }
.tl-ring { width: 12px; height: 12px; border: 1.500px solid #e8674a; border-radius: 50%; margin-top: 9px; }
.tl-body { flex: 1; padding-left: 1px; }
.tl-first { display: flex; justify-content: space-between; font-size: 13px; align-items: center; color: #222; padding-right: 2px; height: 18px; }
.tl-first a { text-decoration: underline; }
.tl-q { width: 12px; height: 12px; color: #444; }
.tl-label { margin-top: 9px; font-size: 13px; color: #222; }
.tl-input { margin-top: 4px; height: 50px; border: 1px solid #ccc; border-radius: 3px; color: #aaa; padding: 6px 12px; font-size: 12px; line-height: 18px; }
.commit { display: block; width: 100%; margin-top: 8px; height: 32px; border: 0; border-radius: 3px; background: #48a13f; color: #fff; font-size: 12px; padding: 0 0 2px; }
.tl-date { margin-top: 16px; color: #888; font-size: 13px; }
.tl-created { font-size: 13px; color: #222; }

.rtab { width: 21px; flex: none; height: 126px; background: #efefef; display: flex; align-items: center; justify-content: center; }
.rtab span { writing-mode: vertical-rl; font-size: 12.500px; font-weight: 600; color: #333; white-space: nowrap; }
```
